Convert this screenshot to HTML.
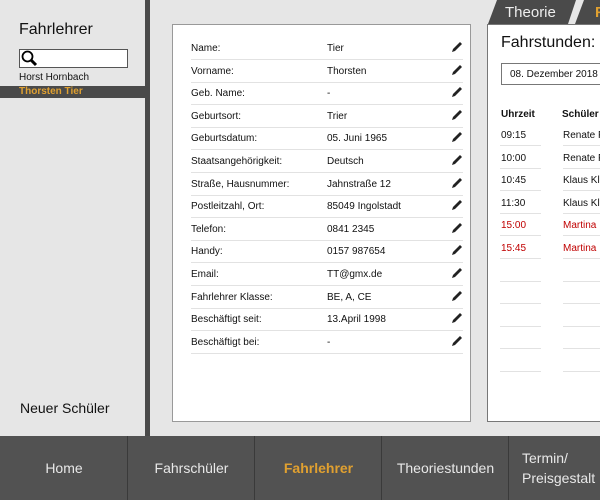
<!DOCTYPE html>
<html><head><style>
*{margin:0;padding:0;box-sizing:border-box}
body{width:600px;height:500px;overflow:hidden;background:#e6e6e6;font-family:"Liberation Sans",sans-serif;color:#111;position:relative}
.a{position:absolute;white-space:nowrap}
.row{position:absolute;left:191px;width:272px;height:21px;border-bottom:1px solid #e2e2e2;font-size:10px}
.row span{position:absolute;top:4px;white-space:nowrap}
.row .v{left:136px}
.pen{position:absolute;left:260px;top:2px}
.t{position:absolute;font-size:10px;white-space:nowrap}
.ln{position:absolute;height:1px;background:#e2e2e2}
.nav{position:absolute;top:436px;height:64px;background:#525252;border-left:1px solid #3a3a3a;color:#e8e8e8;font-size:14px;display:flex;align-items:center;justify-content:center;white-space:nowrap}
</style></head><body>
<div class="a" style="left:0;top:0;width:145px;height:436px;background:#e6e6e6"></div>
<div class="a" style="left:145px;top:0;width:5px;height:436px;background:#4a4a4a"></div>
<div class="a" style="left:19px;top:21px;font-size:16px">Fahrlehrer</div>
<div class="a" style="left:19px;top:49px;width:109px;height:19px;background:#fff;border:1px solid #555"></div>
<svg class="a" style="left:20px;top:49px" width="19" height="19" viewBox="0 0 19 19"><circle cx="7.5" cy="7.5" r="5" fill="none" stroke="#000" stroke-width="1.8"/><line x1="11" y1="11" x2="16" y2="16" stroke="#000" stroke-width="3"/></svg>
<div class="a" style="left:19px;top:72px;font-size:10px">Horst Hornbach</div>
<div class="a" style="left:0;top:86px;width:145px;height:12px;background:#4a4a4a"></div>
<div class="a" style="left:19px;top:86px;font-size:10px;color:#e0a030;font-weight:bold">Thorsten Tier</div>
<div class="a" style="left:20px;top:400px;font-size:14px">Neuer Schüler</div>

<div class="a" style="left:172px;top:24px;width:299px;height:398px;background:#fff;border:1px solid #999"></div>
<div id="rows"></div>

<svg class="a" style="left:488px;top:0" width="112" height="25"><polygon points="0,24 9,0 88,0 80,24" fill="#4a4a4a"/><polygon points="87,24 96,0 112,0 112,24" fill="#4a4a4a"/></svg>
<div class="a" style="left:505px;top:4px;font-size:15px;color:#eee">Theorie</div>
<div class="a" style="left:595px;top:4px;font-size:15px;color:#e0a030;font-weight:bold">F</div>
<div class="a" style="left:487px;top:24px;width:120px;height:398px;background:#fff;border:1px solid #777"></div>
<div class="a" style="left:501px;top:34px;font-size:16px">Fahrstunden:</div>
<div class="a" style="left:501px;top:63px;width:110px;height:22px;border:1px solid #777;font-size:10px;padding:5px 8px">08. Dezember 2018</div>
<div class="a" style="left:501px;top:109px;font-size:10px;font-weight:bold">Uhrzeit</div>
<div class="a" style="left:562px;top:109px;font-size:10px;font-weight:bold">Schüler</div>
<div id="sched"></div>

<div class="nav" style="left:0;width:128px;border-left:none">Home</div>
<div class="nav" style="left:127px;width:128px">Fahrschüler</div>
<div class="nav" style="left:254px;width:128px;color:#e0a030;font-weight:bold">Fahrlehrer</div>
<div class="nav" style="left:381px;width:128px">Theoriestunden</div>
<div class="nav" style="left:508px;width:100px;justify-content:flex-start;padding-left:13px;line-height:20px">Termin/<br>Preisgestalt</div>
<script>
var d=[["Name:","Tier"],["Vorname:","Thorsten"],["Geb. Name:","-"],["Geburtsort:","Trier"],["Geburtsdatum:","05. Juni 1965"],["Staatsangehörigkeit:","Deutsch"],["Straße, Hausnummer:","Jahnstraße 12"],["Postleitzahl, Ort:","85049 Ingolstadt"],["Telefon:","0841 2345"],["Handy:","0157 987654"],["Email:","TT@gmx.de"],["Fahrlehrer Klasse:","BE, A, CE"],["Beschäftigt seit:","13.April 1998"],["Beschäftigt bei:","-"]];
var h="";d.forEach(function(r,i){var y=39+i*22.6;h+='<div class="row" style="top:'+y+'px"><span>'+r[0]+'</span><span class="v">'+r[1]+'</span><svg class="pen" width="12" height="12" viewBox="0 0 12 12"><path d="M1 11 L2 8 L9 1 L11 3 L4 10 Z" fill="#222"/></svg></div>';});
document.getElementById("rows").innerHTML=h;
var s=[["09:15","Renate F",0],["10:00","Renate F",0],["10:45","Klaus Kla",0],["11:30","Klaus Kla",0],["15:00","Martina",1],["15:45","Martina",1]];
h="";for(var i=0;i<11;i++){var y=130+i*22.6;if(s[i]){var c=s[i][2]?"#c00000":"#111";h+='<div class="t" style="left:501px;top:'+y+'px;color:'+c+'">'+s[i][0]+'</div><div class="t" style="left:563px;top:'+y+'px;color:'+c+'">'+s[i][1]+'</div>';}h+='<div class="ln" style="left:500px;width:41px;top:'+(y+15)+'px"></div><div class="ln" style="left:563px;width:40px;top:'+(y+15)+'px"></div>';}
document.getElementById("sched").innerHTML=h;
</script>
</body></html>
